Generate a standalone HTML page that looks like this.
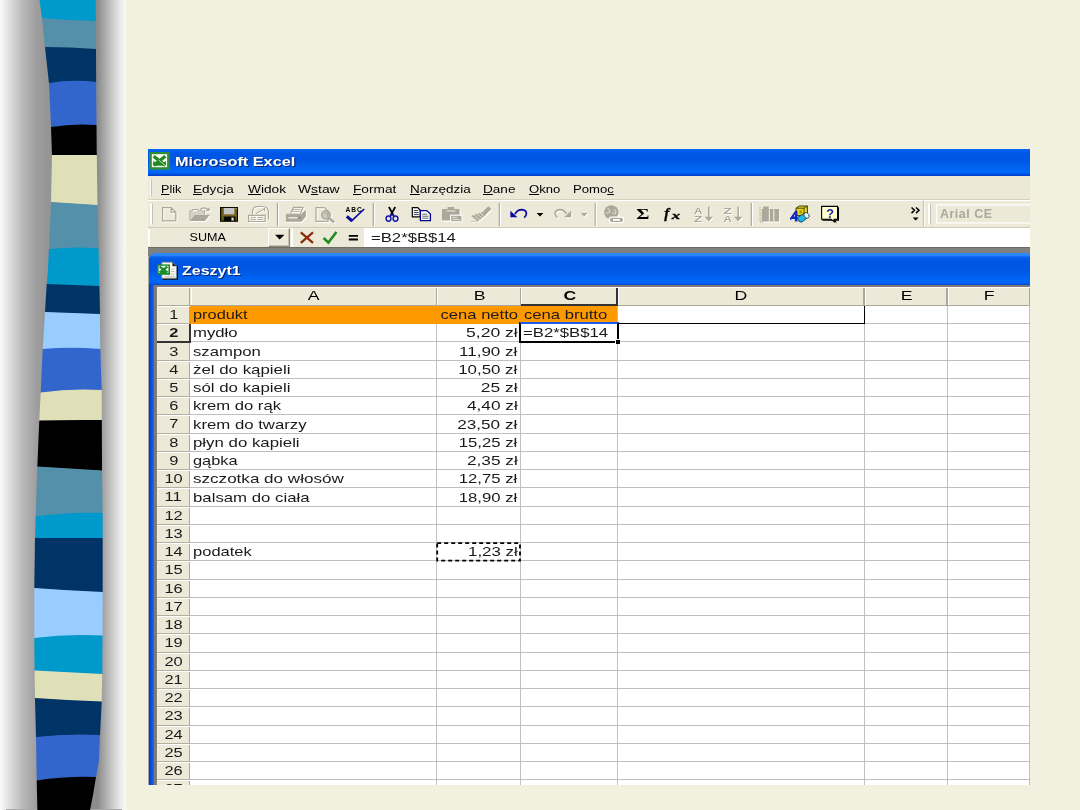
<!DOCTYPE html><html lang="pl"><head><meta charset="utf-8"><title>Microsoft Excel - Zeszyt1</title><style>
*{box-sizing:border-box;margin:0;padding:0}
html,body{width:1080px;height:810px;overflow:hidden}
body{background:radial-gradient(circle at 0.5px 0.5px,#ebead8 0.55px,transparent 0.85px) 0 0/4px 4px,radial-gradient(circle at 0.5px 0.5px,#ebead8 0.55px,transparent 0.85px) 2px 2px/4px 4px,#f3f2e0;font-family:"Liberation Sans",sans-serif;position:relative}
.abs{position:absolute}
#lg{left:0;top:0;width:126px;height:810px;background:linear-gradient(to right,#fbfbfb 0px,#ececec 5px,#d7d7d7 12px,#b6b6b6 24px,#9f9f9f 36px,#969696 45px,#929292 60px,#8c8c8c 98px,#b4b4b4 107px,#d6d6d6 115px,#efefef 122px,#fafafa 126px)}
#rib{left:0;top:0}
#xl{left:148px;top:149px;width:882px;height:636px;background:#ece9d8;overflow:hidden}
#tb{left:0;top:0;width:882px;height:27px;background:linear-gradient(to bottom,#0a6cf8 0px,#0560ee 1.5px,#0057e6 4px,#0055e2 9px,#0058e6 13px,#0062f0 18px,#0068f8 22.5px,#005cec 24.5px,#0040cc 26px,#0044d4 27px)}
.ttl{color:#fff;font-weight:bold;font-size:14px;white-space:nowrap;text-shadow:1px 1px 0 #0a2a7a}
.menu{font-size:12.4px;color:#000;white-space:nowrap;top:181.5px;line-height:14px}
.menu u{text-decoration:underline;text-underline-offset:1px}
.cell{font-size:14.3px;letter-spacing:1.38px;white-space:nowrap;color:#1c1c1c;line-height:16px;height:16px}
.rh{font-size:14.8px;letter-spacing:0.7px;color:#000;text-align:center;line-height:16px;height:16px;left:157px;width:33px}
.ch{font-size:14.3px;color:#000;text-align:center;line-height:16px;height:16px;top:288.5px}
.gl{background:#c0c0c0}
.t{white-space:nowrap}
.t u{text-underline-offset:1px}
</style></head><body>
<div id="lg" class="abs"></div>
<div class="abs" style="left:6px;top:808.6px;width:116px;height:1.4px;background:#a8a8a8"></div>
<svg id="rib" class="abs" width="130" height="810" viewBox="0 0 130 810">
<path d="M39.0 -5.0 Q67.2 -5.0 95.5 -5.0 L95.7 0.0 L95.8 21.6 Q68.9 21.3 42.0 18.6 L39.5 0.0 L39.0 -5.0 Z" fill="#0099cc"/>
<path d="M42.0 18.0 Q68.9 20.7 95.8 21.0 L96.0 49.6 Q70.5 47.6 45.0 47.6 L42.0 18.0 Z" fill="#5590aa"/>
<path d="M45.0 47.0 Q70.5 47.0 96.0 49.0 L96.2 82.6 Q72.6 79.9 49.0 83.6 L45.0 47.0 Z" fill="#003366"/>
<path d="M49.0 83.0 Q72.6 79.3 96.2 82.0 L96.5 125.6 Q73.8 123.8 51.0 127.6 L49.0 83.0 Z" fill="#3366cc"/>
<path d="M51.0 127.0 Q73.8 123.2 96.5 125.0 L96.7 150.0 L96.8 155.6 Q74.4 155.6 52.0 155.6 L51.0 127.0 Z" fill="#000000"/>
<path d="M52.0 155.0 Q74.4 155.0 96.8 155.0 L97.5 205.6 Q74.2 204.1 51.0 202.6 L52.0 155.0 Z" fill="#e0e0b8"/>
<path d="M51.0 202.0 Q74.2 203.5 97.5 205.0 L98.5 249.2 Q73.7 246.9 48.9 249.9 L49.0 248.0 L51.0 202.0 Z" fill="#5590aa"/>
<path d="M48.9 249.3 Q73.7 246.3 98.5 248.6 L99.0 270.0 L99.4 286.6 Q73.0 285.6 46.7 284.6 L48.0 270.0 L48.9 249.3 Z" fill="#0099cc"/>
<path d="M46.7 284.0 Q73.0 285.0 99.4 286.0 L100.0 314.6 Q72.5 313.6 45.0 312.6 L46.7 284.0 Z" fill="#003366"/>
<path d="M45.0 312.0 Q72.5 313.0 100.0 314.0 L100.3 349.6 Q71.5 347.2 42.7 349.6 L45.0 312.0 Z" fill="#99ccff"/>
<path d="M42.7 349.0 Q71.5 346.6 100.3 349.0 L101.7 390.6 Q71.2 388.7 40.7 393.1 L40.7 392.0 L42.7 349.0 Z" fill="#3366cc"/>
<path d="M40.7 392.5 Q71.2 388.1 101.7 390.0 L101.8 420.6 Q70.5 420.2 39.3 421.1 L39.3 420.0 L40.7 392.5 Z" fill="#e0e0b8"/>
<path d="M39.3 420.5 Q70.5 419.6 101.8 420.0 L102.0 470.0 L102.0 471.1 Q69.7 469.1 37.3 467.1 L39.3 420.5 Z" fill="#000000"/>
<path d="M37.3 466.5 Q69.7 468.5 102.0 470.5 L102.7 513.6 Q69.2 512.4 35.7 517.1 L35.7 516.0 L37.3 467.0 L37.3 466.5 Z" fill="#5590aa"/>
<path d="M35.7 516.5 Q69.2 511.8 102.7 513.0 L102.7 538.6 Q68.8 538.6 35.0 538.6 L35.7 516.5 Z" fill="#0099cc"/>
<path d="M35.0 538.0 Q68.8 538.0 102.7 538.0 L102.7 592.6 Q68.5 591.2 34.3 588.6 L35.0 538.0 Z" fill="#003366"/>
<path d="M34.3 588.0 Q68.5 590.6 102.7 592.0 L102.5 636.1 Q68.4 634.1 34.3 638.6 L34.3 588.0 Z" fill="#99ccff"/>
<path d="M34.3 638.0 Q68.4 633.5 102.5 635.5 L102.3 674.6 Q68.4 672.9 34.6 671.1 L34.3 638.0 Z" fill="#0099cc"/>
<path d="M34.6 670.5 Q68.4 672.2 102.3 674.0 L101.7 701.0 L101.7 702.1 Q68.3 701.0 35.0 698.6 L34.6 671.0 L34.6 670.5 Z" fill="#e0e0b8"/>
<path d="M35.0 698.0 Q68.3 700.4 101.7 701.5 L100.0 735.6 Q68.0 733.8 36.0 737.6 L35.0 698.0 Z" fill="#003366"/>
<path d="M36.0 737.0 Q68.0 733.2 100.0 735.0 L99.0 760.0 L96.0 777.6 Q66.4 776.4 36.7 781.1 L36.7 780.0 L36.0 737.0 Z" fill="#3366cc"/>
<path d="M36.7 780.5 Q66.4 775.8 96.0 777.0 L93.0 795.0 L89.0 815.6 Q63.2 815.6 37.5 815.6 L36.7 780.5 Z" fill="#000000"/>
</svg>
<div class="abs" id="clip" style="left:0;top:0;width:1030px;height:785px;overflow:hidden;will-change:transform">
<div id="xl" class="abs">
<div id="tb" class="abs"></div>
<svg class="abs" style="left:1px;top:3px" width="21" height="18" viewBox="149 152 21 18"><rect x="149" y="152" width="21" height="17.600" fill="#2f8c2f"/><rect x="151.800" y="154.200" width="15.300" height="13" fill="#fff"/><path d="M153.600 156.200L165.400 165.400M165.400 156.200L153.600 165.400" stroke="#1f8a1f" stroke-width="3.300" fill="none"/><path d="M154 165.800l5.500-4.600l5.600 4.600z" fill="#1f8a1f"/><path d="M153.200 160.800l3 2.400l-3 2.400zM165.900 160.800l-3 2.400l3 2.400z" fill="#1f8a1f"/><path d="M158.600 160l6.800 5.600" stroke="#e8f4e4" stroke-width="0.800"/></svg>
<div class="abs t" style="left:26.80px;transform-origin:0 50%;top:4.60px;font:bold 13.6px 'Liberation Sans';line-height:16px;color:#fff;transform:scaleX(1.197);text-shadow:1px 1px 0 #0a2a7a">Microsoft Excel</div>
</div>
<div class="abs" style="left:148px;top:176px;width:882px;height:24px;background:#ece9d8;border-bottom:1px solid #d8d2bd"></div>
<div class="abs" style="left:150px;top:179px;width:2px;height:17px;background:#fff;border-right:1px solid #c5c2b2"></div>
<div class="abs t" style="left:161.40px;transform-origin:0 50%;top:181.90px;font:normal 11.6px 'Liberation Sans';line-height:14px;color:#000;transform:scaleX(1.086)"><u>P</u>lik</div>
<div class="abs t" style="left:193.10px;transform-origin:0 50%;top:181.90px;font:normal 11.6px 'Liberation Sans';line-height:14px;color:#000;transform:scaleX(1.172)"><u>E</u>dycja</div>
<div class="abs t" style="left:247.60px;transform-origin:0 50%;top:181.90px;font:normal 11.6px 'Liberation Sans';line-height:14px;color:#000;transform:scaleX(1.182)"><u>W</u>idok</div>
<div class="abs t" style="left:298.30px;transform-origin:0 50%;top:181.90px;font:normal 11.6px 'Liberation Sans';line-height:14px;color:#000;transform:scaleX(1.196)">W<u>s</u>taw</div>
<div class="abs t" style="left:353.10px;transform-origin:0 50%;top:181.90px;font:normal 11.6px 'Liberation Sans';line-height:14px;color:#000;transform:scaleX(1.179)"><u>F</u>ormat</div>
<div class="abs t" style="left:409.60px;transform-origin:0 50%;top:181.90px;font:normal 11.6px 'Liberation Sans';line-height:14px;color:#000;transform:scaleX(1.165)"><u>N</u>arzędzia</div>
<div class="abs t" style="left:482.90px;transform-origin:0 50%;top:181.90px;font:normal 11.6px 'Liberation Sans';line-height:14px;color:#000;transform:scaleX(1.172)"><u>D</u>ane</div>
<div class="abs t" style="left:528.60px;transform-origin:0 50%;top:181.90px;font:normal 11.6px 'Liberation Sans';line-height:14px;color:#000;transform:scaleX(1.129)"><u>O</u>kno</div>
<div class="abs t" style="left:572.90px;transform-origin:0 50%;top:181.90px;font:normal 11.6px 'Liberation Sans';line-height:14px;color:#000;transform:scaleX(1.130)">Pomo<u>c</u></div>
<div class="abs" style="left:148px;top:200px;width:882px;height:27px;background:#ece9d8;border-top:1px solid #fff"></div>
<svg class="abs" style="left:148px;top:200px" width="882" height="27" viewBox="148 200 882 27" font-family="'Liberation Sans',sans-serif"><path d="M151 203.5v21" stroke="#fff" stroke-width="2"/><path d="M152.5 203.5v21" stroke="#c5c2b2" stroke-width="1"/><g transform="translate(1,1)" stroke="#ffffff" fill="none" color="#ffffff"><path d="M162.6 207.6h8.6l4.6 4.6v8.6h-13.2z M171.2 207.6v4.6h4.6" stroke-width="1.2"/></g><g stroke="#aca899" fill="none" color="#aca899"><path d="M162.6 207.6h8.6l4.6 4.6v8.6h-13.2z M171.2 207.6v4.6h4.6" stroke-width="1.2"/></g><g transform="translate(1,1)" stroke="#ffffff" fill="none" color="#ffffff"><path d="M190 220.500v-9.500h2l1-1.500h4.500l1 1.500h6v3.500" stroke-width="1.200"/><path d="M191 219l3.200-4.600h9.600v-2.600h-12.800z" fill="currentColor" stroke="none" opacity="0.450"/><path d="M189.8 221l4.7-6.3h15.5l-5.2 6.3z" fill="currentColor" stroke="none"/><path d="M200 209.8q4-3.8 8-0.3" stroke-width="1.2"/><path d="M209.6 207.2v3.8h-3.8z" fill="currentColor" stroke="none"/></g><g stroke="#aca899" fill="none" color="#aca899"><path d="M190 220.500v-9.500h2l1-1.500h4.500l1 1.500h6v3.500" stroke-width="1.200"/><path d="M191 219l3.200-4.600h9.600v-2.600h-12.800z" fill="currentColor" stroke="none" opacity="0.450"/><path d="M189.8 221l4.7-6.3h15.5l-5.2 6.3z" fill="currentColor" stroke="none"/><path d="M200 209.8q4-3.8 8-0.3" stroke-width="1.2"/><path d="M209.6 207.2v3.8h-3.8z" fill="currentColor" stroke="none"/></g><rect x="220" y="207" width="18" height="14.8" fill="#0a0a00"/><rect x="221.3" y="208" width="15.6" height="12.6" fill="#6b5d14"/><rect x="223.8" y="208" width="10.6" height="6.4" fill="#c6c6c6"/><rect x="223.8" y="216.6" width="11.6" height="4.6" fill="#050500"/><rect x="231.4" y="217.6" width="2.4" height="3" fill="#d8d8d8"/><rect x="235.6" y="208.2" width="1.3" height="1.2" fill="#b8b070"/><path d="M221.5 215.2h15" stroke="#8a6a30" stroke-width="0.8"/><g transform="translate(1,1)" stroke="#ffffff" fill="none" color="#ffffff"><path d="M252.5 214.5v-3q0-5 6-5h3.5q6.5 0 6.5 5.5v7.5" stroke-width="1.2"/><path d="M248.6 215.3h16.6v6.2h-16.6z" stroke-width="1.2"/><path d="M250.8 217.4h5.2M250.8 219.6h5.2M258 217.4h5.2M258 219.6h5.2" stroke-width="1"/><path d="M256 213.5l8-4.5M264.5 208v3" stroke-width="1"/></g><g stroke="#aca899" fill="none" color="#aca899"><path d="M252.5 214.5v-3q0-5 6-5h3.5q6.5 0 6.5 5.5v7.5" stroke-width="1.2"/><path d="M248.6 215.3h16.6v6.2h-16.6z" stroke-width="1.2"/><path d="M250.8 217.4h5.2M250.8 219.6h5.2M258 217.4h5.2M258 219.6h5.2" stroke-width="1"/><path d="M256 213.5l8-4.5M264.5 208v3" stroke-width="1"/></g><path d="M277.4 203v23" stroke="#aca899" stroke-width="1.2"/><path d="M278.6 203v23" stroke="#fff" stroke-width="1"/><g transform="translate(1,1)" stroke="#ffffff" fill="none" color="#ffffff"><path d="M290.5 213.5l3-6.2h9.5l-2.5 6.2" stroke-width="1.2"/><path d="M292.5 209.3h8M291.6 211.3h8" stroke-width="0.9"/><path d="M286.4 214.2h15.2l3.8-3.4v5.8l-3.8 4.6h-15.2z" fill="currentColor" stroke-width="1"/><path d="M288.500 217.800h9" stroke="#f4f2e8" stroke-width="1.300"/><path d="M298.500 217.800h2.500" stroke="#8a8778" stroke-width="1.300"/></g><g stroke="#aca899" fill="none" color="#aca899"><path d="M290.5 213.5l3-6.2h9.5l-2.5 6.2" stroke-width="1.2"/><path d="M292.5 209.3h8M291.6 211.3h8" stroke-width="0.9"/><path d="M286.4 214.2h15.2l3.8-3.4v5.8l-3.8 4.6h-15.2z" fill="currentColor" stroke-width="1"/><path d="M288.500 217.800h9" stroke="#f4f2e8" stroke-width="1.300"/><path d="M298.500 217.800h2.500" stroke="#8a8778" stroke-width="1.300"/></g><g transform="translate(1,1)" stroke="#ffffff" fill="none" color="#ffffff"><path d="M316 207.6h8.5l3.5 3.5v10.3h-12z" stroke-width="1.2"/><circle cx="326" cy="215" r="4.200" stroke-width="1.600" fill="currentColor" fill-opacity="0.550"/><path d="M329 218.2l5.2 4.2" stroke-width="2.2"/><path d="M324 213.5h3.5v2.5" stroke-width="1"/></g><g stroke="#aca899" fill="none" color="#aca899"><path d="M316 207.6h8.5l3.5 3.5v10.3h-12z" stroke-width="1.2"/><circle cx="326" cy="215" r="4.200" stroke-width="1.600" fill="currentColor" fill-opacity="0.550"/><path d="M329 218.2l5.2 4.2" stroke-width="2.2"/><path d="M324 213.5h3.5v2.5" stroke-width="1"/></g><text x="345.6" y="212.2" font-size="6.6" font-weight="bold" fill="#000" letter-spacing="0.9">ABC</text><path d="M346.8 216.4l5.4 4.6" stroke="#0b0b9e" stroke-width="3" fill="none"/><path d="M351.4 221.2L364.2 209" stroke="#0b0b9e" stroke-width="1.6" fill="none"/><path d="M373.3 203v23" stroke="#aca899" stroke-width="1.2"/><path d="M374.5 203v23" stroke="#fff" stroke-width="1"/><path d="M388.9 207l4.9 9M395.2 207l-4.9 9" stroke="#000" stroke-width="1.7" fill="none"/><ellipse cx="388.5" cy="218.6" rx="2.4" ry="2.6" fill="none" stroke="#1717b0" stroke-width="1.5"/><ellipse cx="395.5" cy="218.6" rx="2.4" ry="2.6" fill="none" stroke="#1717b0" stroke-width="1.5"/><path d="M390.2 216.2l1.6-2.2M393.8 216.2l-1.6-2.2" stroke="#1717b0" stroke-width="1.4"/><path d="M412.3 207.7h5.4l2.6 2.6v6.6h-8z" fill="#fff" stroke="#000" stroke-width="1.2"/><path d="M413.8 210.6h4.5M413.8 212.6h5M413.8 214.6h5" stroke="#444" stroke-width="1"/><path d="M420.4 210.6h6.4l3.6 3.4v6.6h-10z" fill="#fff" stroke="#00008b" stroke-width="1.3"/><path d="M422.2 214.2h5M422.2 216.2h6.4M422.2 218.2h6.4" stroke="#666" stroke-width="1"/><g><rect x="443" y="210" width="17.6" height="11.6" fill="#fff"/><rect x="442" y="209" width="17.6" height="11.6" rx="1" fill="#aca899"/><rect x="447.6" y="207" width="6.6" height="2.6" fill="#aca899"/><path d="M446.6 211h9" stroke="#e6e3d4" stroke-width="1.2"/><rect x="450.6" y="215.2" width="11.4" height="6.6" fill="#aca899" stroke="#fff" stroke-width="1.1"/><path d="M452.4 217.4h5M452.4 219.6h7.6" stroke="#e6e3d4" stroke-width="1"/></g><g transform="translate(1,1)" stroke="#ffffff" fill="none" color="#ffffff"><path d="M488.2 206.6l3 2.4-5.6 5.4-2.6-2.4z" fill="currentColor" stroke-width="0.6"/><path d="M483 212.2l2.8 2.6-8 6.4-6.2-5.2z" fill="currentColor" stroke-width="0.6"/><path d="M471.4 221.4h5" stroke-width="1" stroke-dasharray="1.2 1"/></g><g stroke="#aca899" fill="none" color="#aca899"><path d="M488.2 206.6l3 2.4-5.6 5.4-2.6-2.4z" fill="currentColor" stroke-width="0.6"/><path d="M483 212.2l2.8 2.6-8 6.4-6.2-5.2z" fill="currentColor" stroke-width="0.6"/><path d="M471.4 221.4h5" stroke-width="1" stroke-dasharray="1.2 1"/></g><path d="M476.4 213.4l6 5M478.8 211.8l5.4 4.6M474 215l6 5.2" stroke="#ece9d8" stroke-width="0.9"/><path d="M499.3 203v23" stroke="#aca899" stroke-width="1.2"/><path d="M500.5 203v23" stroke="#fff" stroke-width="1"/><path d="M510.4 210.8v6.4h7z" fill="#0a0aa0"/><path d="M515 214.2q2.4-4.6 6.8-4.6q4.8 0.4 4.6 4.2q-0.2 2.4-2.2 3.8" stroke="#0a0aa0" stroke-width="1.7" fill="none"/><path d="M536.6 213h6.8l-3.4 3.6z" fill="#000"/><g transform="translate(1,1)" stroke="#ffffff" fill="none" color="#ffffff"><path d="M571.2 210.8v6.4h-7z" fill="currentColor" stroke="none"/><path d="M566.6 214.2q-2.4-4.6-6.8-4.6q-4.8 0.4-4.6 4.2q0.2 2.4 2.2 3.8" stroke-width="1.7"/></g><g stroke="#aca899" fill="none" color="#aca899"><path d="M571.2 210.8v6.4h-7z" fill="currentColor" stroke="none"/><path d="M566.6 214.2q-2.4-4.6-6.8-4.6q-4.8 0.4-4.6 4.2q0.2 2.4 2.2 3.8" stroke-width="1.7"/></g><path d="M581.8 214h6.8l-3.4 3.6z" fill="#fff"/><path d="M580.8 213h6.8l-3.4 3.6z" fill="#aca899"/><path d="M595.2 203v23" stroke="#aca899" stroke-width="1.2"/><path d="M596.4 203v23" stroke="#fff" stroke-width="1"/><circle cx="612.2" cy="213.2" r="7.2" fill="#fff"/><circle cx="611.4" cy="212.4" r="7.2" fill="#aca899"/><path d="M607.5 208.5q3 1 2 3.500q-2 2-3.500 0.500M614 209.500q2.500 1.500 1.500 4q-1.800 1-3-1" stroke="#d9d6c6" stroke-width="1.3" fill="none"/><rect x="609.2" y="217.2" width="14.4" height="5.4" rx="2.7" fill="#aca899" stroke="#fff" stroke-width="1.3"/><rect x="613" y="219" width="7" height="1.8" fill="#fff"/><text x="636.2" y="218.9" font-family="'Liberation Serif',serif" font-weight="bold" font-size="15.5" fill="#000" textLength="13.2" lengthAdjust="spacingAndGlyphs">Σ</text><text x="664.2" y="218" font-family="'Liberation Serif',serif" font-weight="bold" font-style="italic" font-size="15" fill="#000" stroke="#000" stroke-width="0.3">f</text><text x="671.8" y="218.900" font-family="'Liberation Serif',serif" font-weight="bold" font-style="italic" font-size="10.5" fill="#000" stroke="#000" stroke-width="0.3" textLength="8.4" lengthAdjust="spacingAndGlyphs">x</text><g fill="#ffffff" stroke="#ffffff"><text x="695.0" y="214.8" font-size="9.6" font-weight="bold" stroke="none" textLength="8.4" lengthAdjust="spacingAndGlyphs">A</text><text x="695.0" y="223.0" font-size="9.6" font-weight="bold" stroke="none" textLength="8.4" lengthAdjust="spacingAndGlyphs">Z</text><path d="M709.8 207.6v11" stroke-width="1.5" fill="none"/><path d="M705.8 217.8h8l-4 4.800z" stroke="none"/></g><g fill="#aca899" stroke="#aca899"><text x="694.0" y="213.8" font-size="9.6" font-weight="bold" stroke="none" textLength="8.4" lengthAdjust="spacingAndGlyphs">A</text><text x="694.0" y="222.0" font-size="9.6" font-weight="bold" stroke="none" textLength="8.4" lengthAdjust="spacingAndGlyphs">Z</text><path d="M708.8 206.6v11" stroke-width="1.5" fill="none"/><path d="M704.8 216.8h8l-4 4.800z" stroke="none"/></g><g fill="#ffffff" stroke="#ffffff"><text x="724.4" y="214.8" font-size="9.6" font-weight="bold" stroke="none" textLength="8.4" lengthAdjust="spacingAndGlyphs">Z</text><text x="724.4" y="223.0" font-size="9.6" font-weight="bold" stroke="none" textLength="8.4" lengthAdjust="spacingAndGlyphs">A</text><path d="M739.2 207.6v11" stroke-width="1.5" fill="none"/><path d="M735.2 217.8h8l-4 4.800z" stroke="none"/></g><g fill="#aca899" stroke="#aca899"><text x="723.4" y="213.8" font-size="9.6" font-weight="bold" stroke="none" textLength="8.4" lengthAdjust="spacingAndGlyphs">Z</text><text x="723.4" y="222.0" font-size="9.6" font-weight="bold" stroke="none" textLength="8.4" lengthAdjust="spacingAndGlyphs">A</text><path d="M738.2 206.6v11" stroke-width="1.5" fill="none"/><path d="M734.2 216.8h8l-4 4.800z" stroke="none"/></g><path d="M751.3 203v23" stroke="#aca899" stroke-width="1.2"/><path d="M752.5 203v23" stroke="#fff" stroke-width="1"/><path d="M762.800 210h1.400v-2.600h5.600v2.600h10.400v12.600h-17.400z" fill="#fff"/><path d="M761.800 209h1.400v-2.600h5.600v2.600h10.400v12.600h-17.400z" fill="#aca899"/><path d="M760 207v15h3" stroke="#aca899" stroke-width="1" fill="none" stroke-dasharray="1.5 1"/><path d="M769.400 209.500v12M773.800 209.500v12" stroke="#ece9d8" stroke-width="1.2"/><path d="M796 208.200l3.400-2.200h8v7l-3.400 2.600h-8z" fill="#e8d820" stroke="#3a3a10" stroke-width="1"/><path d="M796 208.200h8v7.400M804 208.200l3.400-2.200" stroke="#3a3a10" stroke-width="0.9" fill="none"/><rect x="799.600" y="210.400" width="2.400" height="3" fill="#a89400"/><path d="M789.800 218.400l5.400-7.600h2.200v10.600h-2.600v-2.400h-3.200l-0.800 1.400z" fill="#1428c8"/><path d="M793.600 216.600h1.400v-2.400z" fill="#ece9d8"/><path d="M797.400 217.600l7-4.400q3.400-0.400 5 3l-7.200 5.600q-3.600 1.400-4.800-4.200z" fill="#18b8e8" stroke="#203040" stroke-width="0.9"/><ellipse cx="806.600" cy="215.400" rx="2.300" ry="3" transform="rotate(-35 806.600 215.400)" fill="#e8f8ff" stroke="#203040" stroke-width="0.7"/><path d="M822.400 207.200h16.600v13.600h-3.200l0.800 2.200l-3.800-2.200h-10.400z" fill="#000"/><path d="M821.600 206.400h16v12.800h-3.600l0.400 2.600l-3.400-2.600h-9.400z" fill="#ffffd0" stroke="#000" stroke-width="1.1"/><text x="826.200" y="218.300" font-size="12.600" font-weight="bold" fill="#1a1a9c">?</text><path d="M911.500 207.500l3 2.800l-3 2.800M916 207.500l3 2.800l-3 2.800" stroke="#000" stroke-width="1.500" fill="none"/><path d="M912.600 217.500h6l-3 3z" fill="#000"/><path d="M923.500 200.500v26" stroke="#c5c2b2" stroke-width="1.200"/><path d="M924.700 200.500v26" stroke="#fff" stroke-width="1"/><path d="M929 203.500v21" stroke="#fff" stroke-width="2"/><path d="M930.500 203.500v21" stroke="#c5c2b2" stroke-width="1"/><rect x="936.500" y="204.900" width="100" height="18" fill="#ece9d8" stroke="#fff" stroke-width="1.300"/><text x="940" y="217.800" font-size="12.400" font-weight="bold" fill="#aca899" letter-spacing="0.550">Arial CE</text></svg>
<div class="abs" style="left:148px;top:227px;width:882px;height:21px;background:#ece9d8;border-top:1px solid #d0ccb8"></div>
<div class="abs" style="left:363.800px;top:228.200px;width:666.500px;height:19px;background:#fff"></div>
<div class="abs" style="left:148.300px;top:229px;width:2.200px;height:17px;background:#fff"></div>
<div class="abs t" style="left:191.05px;transform-origin:50% 50%;top:229.90px;font:normal 11.6px 'Liberation Sans';line-height:14px;color:#000;transform:scaleX(1.084)">SUMA</div>
<div class="abs" style="left:268.300px;top:228.200px;width:22px;height:18.400px;background:#ece9d8;border:1px solid;border-color:#fff #8d8a7a #8d8a7a #fff;box-shadow:inset -1px -1px 0 #c5c2b2"></div>
<svg class="abs" style="left:274px;top:234px" width="12" height="7"><path d="M1 0.800h9.400l-4.700 4.600z" fill="#000"/></svg>
<div class="abs" style="left:291.300px;top:228px;width:1.400px;height:19px;background:#fff"></div>
<svg class="abs" style="left:298px;top:229px" width="66" height="18" viewBox="0 0 66 18"><path d="M2.800 3.400L15 13.800M15 3.400L2.800 13.800" stroke="#8a2a08" stroke-width="2.200" fill="none"/><path d="M25.600 9L30.400 13.600L38.400 3" stroke="#1e8c1e" stroke-width="2.600" fill="none"/><path d="M50.800 6.900h9.200M50.800 10.500h9.200" stroke="#000" stroke-width="1.800"/></svg>
<div class="abs t" style="left:371.30px;transform-origin:0 50%;top:228.50px;font:normal 13.6px 'Liberation Sans';line-height:18px;color:#1a1a1a;transform:scaleX(1.227)">=B2*$B$14</div>
<div class="abs" style="left:148px;top:246.800px;width:882px;height:1.600px;background:#6e6c62"></div>
<div class="abs" style="left:148px;top:248.200px;width:882px;height:538px;background:#808080"></div>
<div class="abs" style="left:148px;top:256px;width:1px;height:530px;background:#a8a8a0"></div>
<div class="abs" style="left:149px;top:253px;width:881px;height:540px;background:linear-gradient(to right,#0034cc 0px,#0a50e8 2.500px,#1868f8 5px,#1868f8 100%);border-top-left-radius:8px"></div>
<div class="abs" style="left:149px;top:253px;width:881px;height:32.200px;border-top-left-radius:8px;background:linear-gradient(to bottom,#2a84ff 0px,#2f8cff 2px,#0a62ee 4px,#0057e6 7px,#0055e2 14px,#0058e6 19px,#0062f0 24px,#0068f8 29px,#005cec 30.500px,#0040cc 32px)"></div>
<svg class="abs" style="left:156px;top:261px" width="22" height="19" viewBox="156 261 22 19"><path d="M162.500 279h15v-13.500" stroke="#111" stroke-width="1.400" fill="none"/><path d="M161.800 262.200h10.600l4 4v12h-14.600z" fill="#fbfbf6" stroke="#8a8a80" stroke-width="0.800"/><path d="M172.400 262.200v4h4z" fill="#222"/><path d="M170.500 269h4M170.500 271.500h4M170.500 274h4M165 276.300h9.500" stroke="#c4c4bc" stroke-width="1"/><rect x="157" y="264.400" width="13" height="10.400" fill="#1f8a2a"/><rect x="158.600" y="265.800" width="9.800" height="7" fill="#f4faf2"/><path d="M159.600 266.600l7.800 5.800M167.400 266.600l-7.800 5.800" stroke="#1f8a2a" stroke-width="2.300"/><path d="M160 273l3.500-3l3.500 3z" fill="#1f8a2a"/></svg>
<div class="abs t" style="left:182.40px;transform-origin:0 50%;top:263.20px;font:bold 13.6px 'Liberation Sans';line-height:16px;color:#fff;transform:scaleX(1.175);text-shadow:1px 1px 0 #0a2a7a">Zeszyt1</div>
<div class="abs" style="left:154px;top:285px;width:876px;height:500px;background:#7f7d73"></div>
<div class="abs" style="left:156.5px;top:287px;width:873.5px;height:498px;background:#fff"></div>
<div class="abs" style="left:156.5px;top:287px;width:873.5px;height:18.5px;background:#ece9d8"></div>
<div class="abs" style="left:156.5px;top:287px;width:33.7px;height:498px;background:#ece9d8"></div>
<div class="abs" style="left:190.2px;top:305.5px;width:427.1px;height:18.2px;background:#ff9900"></div>
<div class="abs gl" style="left:864.3px;top:323.00px;width:166px;height:1px"></div>
<div class="abs gl" style="left:190.2px;top:341.00px;width:840px;height:1px"></div>
<div class="abs gl" style="left:190.2px;top:360.00px;width:840px;height:1px"></div>
<div class="abs gl" style="left:190.2px;top:378.00px;width:840px;height:1px"></div>
<div class="abs gl" style="left:190.2px;top:396.00px;width:840px;height:1px"></div>
<div class="abs gl" style="left:190.2px;top:414.00px;width:840px;height:1px"></div>
<div class="abs gl" style="left:190.2px;top:433.00px;width:840px;height:1px"></div>
<div class="abs gl" style="left:190.2px;top:451.00px;width:840px;height:1px"></div>
<div class="abs gl" style="left:190.2px;top:469.00px;width:840px;height:1px"></div>
<div class="abs gl" style="left:190.2px;top:487.00px;width:840px;height:1px"></div>
<div class="abs gl" style="left:190.2px;top:506.00px;width:840px;height:1px"></div>
<div class="abs gl" style="left:190.2px;top:524.00px;width:840px;height:1px"></div>
<div class="abs gl" style="left:190.2px;top:542.00px;width:840px;height:1px"></div>
<div class="abs gl" style="left:190.2px;top:560.00px;width:840px;height:1px"></div>
<div class="abs gl" style="left:190.2px;top:579.00px;width:840px;height:1px"></div>
<div class="abs gl" style="left:190.2px;top:597.00px;width:840px;height:1px"></div>
<div class="abs gl" style="left:190.2px;top:615.00px;width:840px;height:1px"></div>
<div class="abs gl" style="left:190.2px;top:633.00px;width:840px;height:1px"></div>
<div class="abs gl" style="left:190.2px;top:652.00px;width:840px;height:1px"></div>
<div class="abs gl" style="left:190.2px;top:670.00px;width:840px;height:1px"></div>
<div class="abs gl" style="left:190.2px;top:688.00px;width:840px;height:1px"></div>
<div class="abs gl" style="left:190.2px;top:706.00px;width:840px;height:1px"></div>
<div class="abs gl" style="left:190.2px;top:725.00px;width:840px;height:1px"></div>
<div class="abs gl" style="left:190.2px;top:743.00px;width:840px;height:1px"></div>
<div class="abs gl" style="left:190.2px;top:761.00px;width:840px;height:1px"></div>
<div class="abs gl" style="left:190.2px;top:779.00px;width:840px;height:1px"></div>
<div class="abs gl" style="left:436.00px;top:323.75px;width:1px;height:461.25px"></div>
<div class="abs gl" style="left:520.00px;top:323.75px;width:1px;height:461.25px"></div>
<div class="abs gl" style="left:617.00px;top:305.50px;width:1px;height:479.50px"></div>
<div class="abs gl" style="left:864.00px;top:305.50px;width:1px;height:479.50px"></div>
<div class="abs gl" style="left:947.00px;top:305.50px;width:1px;height:479.50px"></div>
<div class="abs gl" style="left:1029.00px;top:305.50px;width:1px;height:479.50px"></div>
<div class="abs" style="left:190.5px;top:287.5px;width:1px;height:17.5px;background:#fff"></div>
<div class="abs" style="left:435.8px;top:287.5px;width:1.2px;height:17.5px;background:#aca899"></div>
<div class="abs t" style="left:309.48px;transform-origin:50% 50%;top:288.30px;font:normal 13.7px 'Liberation Sans';line-height:16px;color:#000;transform:scaleX(1.290)">A</div>
<div class="abs" style="left:437.0px;top:287.5px;width:1px;height:17.5px;background:#fff"></div>
<div class="abs" style="left:519.6px;top:287.5px;width:1.2px;height:17.5px;background:#aca899"></div>
<div class="abs t" style="left:474.63px;transform-origin:50% 50%;top:288.30px;font:normal 13.7px 'Liberation Sans';line-height:16px;color:#000;transform:scaleX(1.290)">B</div>
<div class="abs" style="left:520.8px;top:287.5px;width:1px;height:17.5px;background:#fff"></div>
<div class="abs" style="left:616.4px;top:287.5px;width:1.2px;height:17.5px;background:#aca899"></div>
<div class="abs t" style="left:564.55px;transform-origin:50% 50%;top:288.30px;font:bold 13.7px 'Liberation Sans';line-height:16px;color:#000;transform:scaleX(1.290)">C</div>
<div class="abs" style="left:617.6px;top:287.5px;width:1px;height:17.5px;background:#fff"></div>
<div class="abs" style="left:863.4px;top:287.5px;width:1.2px;height:17.5px;background:#aca899"></div>
<div class="abs t" style="left:736.45px;transform-origin:50% 50%;top:288.30px;font:normal 13.7px 'Liberation Sans';line-height:16px;color:#000;transform:scaleX(1.290)">D</div>
<div class="abs" style="left:864.6px;top:287.5px;width:1px;height:17.5px;background:#fff"></div>
<div class="abs" style="left:946.4px;top:287.5px;width:1.2px;height:17.5px;background:#aca899"></div>
<div class="abs t" style="left:901.83px;transform-origin:50% 50%;top:288.30px;font:normal 13.7px 'Liberation Sans';line-height:16px;color:#000;transform:scaleX(1.290)">E</div>
<div class="abs" style="left:947.6px;top:287.5px;width:1px;height:17.5px;background:#fff"></div>
<div class="abs" style="left:1029.1px;top:287.5px;width:1.2px;height:17.5px;background:#aca899"></div>
<div class="abs t" style="left:985.06px;transform-origin:50% 50%;top:288.30px;font:normal 13.7px 'Liberation Sans';line-height:16px;color:#000;transform:scaleX(1.290)">F</div>
<div class="abs" style="left:189.3px;top:287.5px;width:1.2px;height:497.5px;background:#aca899"></div>
<div class="abs" style="left:156.5px;top:304.6px;width:873.5px;height:1.2px;background:#aca899"></div>
<div class="abs" style="left:157px;top:287.3px;width:873px;height:1px;background:#fff"></div>
<div class="abs" style="left:156.500px;top:287.300px;width:1px;height:498px;background:#f4f2e6"></div>
<div class="abs" style="left:157px;top:323px;width:32.500px;height:1px;background:#b4b09f"></div>
<div class="abs" style="left:157.500px;top:306px;width:32px;height:1px;background:#fff"></div>
<div class="abs t" style="left:169.59px;transform-origin:50% 50%;top:307.00px;font:normal 13.7px 'Liberation Sans';line-height:16px;color:#1a1a1a;transform:scaleX(1.200)">1</div>
<div class="abs" style="left:157px;top:341px;width:32.500px;height:1px;background:#b4b09f"></div>
<div class="abs" style="left:157.500px;top:324px;width:32px;height:1px;background:#fff"></div>
<div class="abs t" style="left:169.59px;transform-origin:50% 50%;top:325.25px;font:bold 13.7px 'Liberation Sans';line-height:16px;color:#1a1a1a;transform:scaleX(1.200)">2</div>
<div class="abs" style="left:157px;top:360px;width:32.500px;height:1px;background:#b4b09f"></div>
<div class="abs" style="left:157.500px;top:342px;width:32px;height:1px;background:#fff"></div>
<div class="abs t" style="left:169.59px;transform-origin:50% 50%;top:343.50px;font:normal 13.7px 'Liberation Sans';line-height:16px;color:#1a1a1a;transform:scaleX(1.200)">3</div>
<div class="abs" style="left:157px;top:378px;width:32.500px;height:1px;background:#b4b09f"></div>
<div class="abs" style="left:157.500px;top:361px;width:32px;height:1px;background:#fff"></div>
<div class="abs t" style="left:169.59px;transform-origin:50% 50%;top:361.74px;font:normal 13.7px 'Liberation Sans';line-height:16px;color:#1a1a1a;transform:scaleX(1.200)">4</div>
<div class="abs" style="left:157px;top:396px;width:32.500px;height:1px;background:#b4b09f"></div>
<div class="abs" style="left:157.500px;top:379px;width:32px;height:1px;background:#fff"></div>
<div class="abs t" style="left:169.59px;transform-origin:50% 50%;top:379.99px;font:normal 13.7px 'Liberation Sans';line-height:16px;color:#1a1a1a;transform:scaleX(1.200)">5</div>
<div class="abs" style="left:157px;top:414px;width:32.500px;height:1px;background:#b4b09f"></div>
<div class="abs" style="left:157.500px;top:397px;width:32px;height:1px;background:#fff"></div>
<div class="abs t" style="left:169.59px;transform-origin:50% 50%;top:398.24px;font:normal 13.7px 'Liberation Sans';line-height:16px;color:#1a1a1a;transform:scaleX(1.200)">6</div>
<div class="abs" style="left:157px;top:433px;width:32.500px;height:1px;background:#b4b09f"></div>
<div class="abs" style="left:157.500px;top:415px;width:32px;height:1px;background:#fff"></div>
<div class="abs t" style="left:169.59px;transform-origin:50% 50%;top:416.49px;font:normal 13.7px 'Liberation Sans';line-height:16px;color:#1a1a1a;transform:scaleX(1.200)">7</div>
<div class="abs" style="left:157px;top:451px;width:32.500px;height:1px;background:#b4b09f"></div>
<div class="abs" style="left:157.500px;top:434px;width:32px;height:1px;background:#fff"></div>
<div class="abs t" style="left:169.59px;transform-origin:50% 50%;top:434.74px;font:normal 13.7px 'Liberation Sans';line-height:16px;color:#1a1a1a;transform:scaleX(1.200)">8</div>
<div class="abs" style="left:157px;top:469px;width:32.500px;height:1px;background:#b4b09f"></div>
<div class="abs" style="left:157.500px;top:452px;width:32px;height:1px;background:#fff"></div>
<div class="abs t" style="left:169.59px;transform-origin:50% 50%;top:452.98px;font:normal 13.7px 'Liberation Sans';line-height:16px;color:#1a1a1a;transform:scaleX(1.200)">9</div>
<div class="abs" style="left:157px;top:487px;width:32.500px;height:1px;background:#b4b09f"></div>
<div class="abs" style="left:157.500px;top:470px;width:32px;height:1px;background:#fff"></div>
<div class="abs t" style="left:165.78px;transform-origin:50% 50%;top:471.23px;font:normal 13.7px 'Liberation Sans';line-height:16px;color:#1a1a1a;transform:scaleX(1.200)">10</div>
<div class="abs" style="left:157px;top:506px;width:32.500px;height:1px;background:#b4b09f"></div>
<div class="abs" style="left:157.500px;top:488px;width:32px;height:1px;background:#fff"></div>
<div class="abs t" style="left:166.29px;transform-origin:50% 50%;top:489.48px;font:normal 13.7px 'Liberation Sans';line-height:16px;color:#1a1a1a;transform:scaleX(1.200)">11</div>
<div class="abs" style="left:157px;top:524px;width:32.500px;height:1px;background:#b4b09f"></div>
<div class="abs" style="left:157.500px;top:507px;width:32px;height:1px;background:#fff"></div>
<div class="abs t" style="left:165.78px;transform-origin:50% 50%;top:507.73px;font:normal 13.7px 'Liberation Sans';line-height:16px;color:#1a1a1a;transform:scaleX(1.200)">12</div>
<div class="abs" style="left:157px;top:542px;width:32.500px;height:1px;background:#b4b09f"></div>
<div class="abs" style="left:157.500px;top:525px;width:32px;height:1px;background:#fff"></div>
<div class="abs t" style="left:165.78px;transform-origin:50% 50%;top:525.98px;font:normal 13.7px 'Liberation Sans';line-height:16px;color:#1a1a1a;transform:scaleX(1.200)">13</div>
<div class="abs" style="left:157px;top:560px;width:32.500px;height:1px;background:#b4b09f"></div>
<div class="abs" style="left:157.500px;top:543px;width:32px;height:1px;background:#fff"></div>
<div class="abs t" style="left:165.78px;transform-origin:50% 50%;top:544.22px;font:normal 13.7px 'Liberation Sans';line-height:16px;color:#1a1a1a;transform:scaleX(1.200)">14</div>
<div class="abs" style="left:157px;top:579px;width:32.500px;height:1px;background:#b4b09f"></div>
<div class="abs" style="left:157.500px;top:561px;width:32px;height:1px;background:#fff"></div>
<div class="abs t" style="left:165.78px;transform-origin:50% 50%;top:562.47px;font:normal 13.7px 'Liberation Sans';line-height:16px;color:#1a1a1a;transform:scaleX(1.200)">15</div>
<div class="abs" style="left:157px;top:597px;width:32.500px;height:1px;background:#b4b09f"></div>
<div class="abs" style="left:157.500px;top:580px;width:32px;height:1px;background:#fff"></div>
<div class="abs t" style="left:165.78px;transform-origin:50% 50%;top:580.72px;font:normal 13.7px 'Liberation Sans';line-height:16px;color:#1a1a1a;transform:scaleX(1.200)">16</div>
<div class="abs" style="left:157px;top:615px;width:32.500px;height:1px;background:#b4b09f"></div>
<div class="abs" style="left:157.500px;top:598px;width:32px;height:1px;background:#fff"></div>
<div class="abs t" style="left:165.78px;transform-origin:50% 50%;top:598.97px;font:normal 13.7px 'Liberation Sans';line-height:16px;color:#1a1a1a;transform:scaleX(1.200)">17</div>
<div class="abs" style="left:157px;top:633px;width:32.500px;height:1px;background:#b4b09f"></div>
<div class="abs" style="left:157.500px;top:616px;width:32px;height:1px;background:#fff"></div>
<div class="abs t" style="left:165.78px;transform-origin:50% 50%;top:617.22px;font:normal 13.7px 'Liberation Sans';line-height:16px;color:#1a1a1a;transform:scaleX(1.200)">18</div>
<div class="abs" style="left:157px;top:652px;width:32.500px;height:1px;background:#b4b09f"></div>
<div class="abs" style="left:157.500px;top:634px;width:32px;height:1px;background:#fff"></div>
<div class="abs t" style="left:165.78px;transform-origin:50% 50%;top:635.46px;font:normal 13.7px 'Liberation Sans';line-height:16px;color:#1a1a1a;transform:scaleX(1.200)">19</div>
<div class="abs" style="left:157px;top:670px;width:32.500px;height:1px;background:#b4b09f"></div>
<div class="abs" style="left:157.500px;top:653px;width:32px;height:1px;background:#fff"></div>
<div class="abs t" style="left:165.78px;transform-origin:50% 50%;top:653.71px;font:normal 13.7px 'Liberation Sans';line-height:16px;color:#1a1a1a;transform:scaleX(1.200)">20</div>
<div class="abs" style="left:157px;top:688px;width:32.500px;height:1px;background:#b4b09f"></div>
<div class="abs" style="left:157.500px;top:671px;width:32px;height:1px;background:#fff"></div>
<div class="abs t" style="left:165.78px;transform-origin:50% 50%;top:671.96px;font:normal 13.7px 'Liberation Sans';line-height:16px;color:#1a1a1a;transform:scaleX(1.200)">21</div>
<div class="abs" style="left:157px;top:706px;width:32.500px;height:1px;background:#b4b09f"></div>
<div class="abs" style="left:157.500px;top:689px;width:32px;height:1px;background:#fff"></div>
<div class="abs t" style="left:165.78px;transform-origin:50% 50%;top:690.21px;font:normal 13.7px 'Liberation Sans';line-height:16px;color:#1a1a1a;transform:scaleX(1.200)">22</div>
<div class="abs" style="left:157px;top:725px;width:32.500px;height:1px;background:#b4b09f"></div>
<div class="abs" style="left:157.500px;top:707px;width:32px;height:1px;background:#fff"></div>
<div class="abs t" style="left:165.78px;transform-origin:50% 50%;top:708.46px;font:normal 13.7px 'Liberation Sans';line-height:16px;color:#1a1a1a;transform:scaleX(1.200)">23</div>
<div class="abs" style="left:157px;top:743px;width:32.500px;height:1px;background:#b4b09f"></div>
<div class="abs" style="left:157.500px;top:726px;width:32px;height:1px;background:#fff"></div>
<div class="abs t" style="left:165.78px;transform-origin:50% 50%;top:726.70px;font:normal 13.7px 'Liberation Sans';line-height:16px;color:#1a1a1a;transform:scaleX(1.200)">24</div>
<div class="abs" style="left:157px;top:761px;width:32.500px;height:1px;background:#b4b09f"></div>
<div class="abs" style="left:157.500px;top:744px;width:32px;height:1px;background:#fff"></div>
<div class="abs t" style="left:165.78px;transform-origin:50% 50%;top:744.95px;font:normal 13.7px 'Liberation Sans';line-height:16px;color:#1a1a1a;transform:scaleX(1.200)">25</div>
<div class="abs" style="left:157px;top:779px;width:32.500px;height:1px;background:#b4b09f"></div>
<div class="abs" style="left:157.500px;top:762px;width:32px;height:1px;background:#fff"></div>
<div class="abs t" style="left:165.78px;transform-origin:50% 50%;top:763.20px;font:normal 13.7px 'Liberation Sans';line-height:16px;color:#1a1a1a;transform:scaleX(1.200)">26</div>
<div class="abs" style="left:157px;top:798px;width:32.500px;height:1px;background:#b4b09f"></div>
<div class="abs" style="left:157.500px;top:780px;width:32px;height:1px;background:#fff"></div>
<div class="abs t" style="left:165.78px;transform-origin:50% 50%;top:781.45px;font:normal 13.7px 'Liberation Sans';line-height:16px;color:#1a1a1a;transform:scaleX(1.200)">27</div>
<div class="abs" style="left:520.5px;top:303.8px;width:97.8px;height:2px;background:#333"></div>
<div class="abs" style="left:616.1px;top:287.5px;width:2px;height:18px;background:#333"></div>
<div class="abs" style="left:157px;top:340.6px;width:33.5px;height:2px;background:#333"></div>
<div class="abs" style="left:188.6px;top:323.7px;width:2px;height:18.2px;background:#333"></div>
<div class="abs t" style="left:193.10px;transform-origin:0 50%;top:307.20px;font:normal 13.5px 'Liberation Sans';line-height:16px;color:#1a1a1a;transform:scaleX(1.212)">produkt</div>
<div class="abs t" style="left:193.10px;transform-origin:0 50%;top:325.45px;font:normal 13.5px 'Liberation Sans';line-height:16px;color:#1a1a1a;transform:scaleX(1.238)">mydło</div>
<div class="abs t" style="left:193.10px;transform-origin:0 50%;top:343.70px;font:normal 13.5px 'Liberation Sans';line-height:16px;color:#1a1a1a;transform:scaleX(1.238)">szampon</div>
<div class="abs t" style="left:193.10px;transform-origin:0 50%;top:361.94px;font:normal 13.5px 'Liberation Sans';line-height:16px;color:#1a1a1a;transform:scaleX(1.249)">żel do kąpieli</div>
<div class="abs t" style="left:193.10px;transform-origin:0 50%;top:380.19px;font:normal 13.5px 'Liberation Sans';line-height:16px;color:#1a1a1a;transform:scaleX(1.249)">sól do kapieli</div>
<div class="abs t" style="left:193.10px;transform-origin:0 50%;top:398.44px;font:normal 13.5px 'Liberation Sans';line-height:16px;color:#1a1a1a;transform:scaleX(1.235)">krem do rąk</div>
<div class="abs t" style="left:193.10px;transform-origin:0 50%;top:416.69px;font:normal 13.5px 'Liberation Sans';line-height:16px;color:#1a1a1a;transform:scaleX(1.241)">krem do twarzy</div>
<div class="abs t" style="left:193.10px;transform-origin:0 50%;top:434.94px;font:normal 13.5px 'Liberation Sans';line-height:16px;color:#1a1a1a;transform:scaleX(1.246)">płyn do kapieli</div>
<div class="abs t" style="left:193.10px;transform-origin:0 50%;top:453.18px;font:normal 13.5px 'Liberation Sans';line-height:16px;color:#1a1a1a;transform:scaleX(1.212)">gąbka</div>
<div class="abs t" style="left:193.10px;transform-origin:0 50%;top:471.43px;font:normal 13.5px 'Liberation Sans';line-height:16px;color:#1a1a1a;transform:scaleX(1.264)">szczotka do włosów</div>
<div class="abs t" style="left:193.10px;transform-origin:0 50%;top:489.68px;font:normal 13.5px 'Liberation Sans';line-height:16px;color:#1a1a1a;transform:scaleX(1.243)">balsam do ciała</div>
<div class="abs t" style="left:193.10px;transform-origin:0 50%;top:544.42px;font:normal 13.5px 'Liberation Sans';line-height:16px;color:#1a1a1a;transform:scaleX(1.224)">podatek</div>
<div class="abs t" style="left:454.54px;transform-origin:100% 50%;top:307.20px;font:normal 13.5px 'Liberation Sans';line-height:16px;color:#1a1a1a;transform:scaleX(1.229)">cena netto</div>
<div class="abs t" style="left:477.82px;transform-origin:100% 50%;top:325.45px;font:normal 13.5px 'Liberation Sans';line-height:16px;color:#1a1a1a;transform:scaleX(1.302)">5,20 zł</div>
<div class="abs t" style="left:471.32px;transform-origin:100% 50%;top:343.70px;font:normal 13.5px 'Liberation Sans';line-height:16px;color:#1a1a1a;transform:scaleX(1.258)">11,90 zł</div>
<div class="abs t" style="left:470.30px;transform-origin:100% 50%;top:361.94px;font:normal 13.5px 'Liberation Sans';line-height:16px;color:#1a1a1a;transform:scaleX(1.250)">10,50 zł</div>
<div class="abs t" style="left:489.07px;transform-origin:100% 50%;top:380.19px;font:normal 13.5px 'Liberation Sans';line-height:16px;color:#1a1a1a;transform:scaleX(1.290)">25 zł</div>
<div class="abs t" style="left:477.82px;transform-origin:100% 50%;top:398.44px;font:normal 13.5px 'Liberation Sans';line-height:16px;color:#1a1a1a;transform:scaleX(1.277)">4,40 zł</div>
<div class="abs t" style="left:470.30px;transform-origin:100% 50%;top:416.69px;font:normal 13.5px 'Liberation Sans';line-height:16px;color:#1a1a1a;transform:scaleX(1.269)">23,50 zł</div>
<div class="abs t" style="left:470.30px;transform-origin:100% 50%;top:434.94px;font:normal 13.5px 'Liberation Sans';line-height:16px;color:#1a1a1a;transform:scaleX(1.237)">15,25 zł</div>
<div class="abs t" style="left:477.82px;transform-origin:100% 50%;top:453.18px;font:normal 13.5px 'Liberation Sans';line-height:16px;color:#1a1a1a;transform:scaleX(1.277)">2,35 zł</div>
<div class="abs t" style="left:470.30px;transform-origin:100% 50%;top:471.43px;font:normal 13.5px 'Liberation Sans';line-height:16px;color:#1a1a1a;transform:scaleX(1.237)">12,75 zł</div>
<div class="abs t" style="left:470.30px;transform-origin:100% 50%;top:489.68px;font:normal 13.5px 'Liberation Sans';line-height:16px;color:#1a1a1a;transform:scaleX(1.237)">18,90 zł</div>
<div class="abs t" style="left:477.82px;transform-origin:100% 50%;top:544.42px;font:normal 13.5px 'Liberation Sans';line-height:16px;color:#1a1a1a;transform:scaleX(1.252)">1,23 zł</div>
<div class="abs t" style="left:524.00px;transform-origin:0 50%;top:307.20px;font:normal 13.5px 'Liberation Sans';line-height:16px;color:#1a1a1a;transform:scaleX(1.232)">cena brutto</div>
<div class="abs" style="left:617px;top:322.8px;width:248px;height:1.5px;background:#000"></div>
<div class="abs" style="left:863.6px;top:305.5px;width:1.5px;height:18.2px;background:#000"></div>
<div class="abs" style="left:519px;top:322px;width:100.3px;height:20.5px;background:#fff;border:2px solid #000;border-top:2px solid #1c5cf0"></div>
<div class="abs" style="left:614.500px;top:339.300px;width:5.800px;height:4.600px;background:#000;border-left:1px solid #fff;border-top:1px solid #fff"></div>
<div class="abs t" style="left:523.10px;transform-origin:0 50%;top:325.45px;font:normal 13.5px 'Liberation Sans';line-height:16px;color:#1a1a1a;transform:scaleX(1.239)">=B2*$B$14</div>
<svg class="abs" style="left:434px;top:540px" width="90" height="24" viewBox="434 540 90 24"><rect x="437.2" y="543.2" width="82.8" height="17.4" fill="none" stroke="#000" stroke-width="1.8" stroke-dasharray="4 3"/></svg>
</div>
</body></html>
